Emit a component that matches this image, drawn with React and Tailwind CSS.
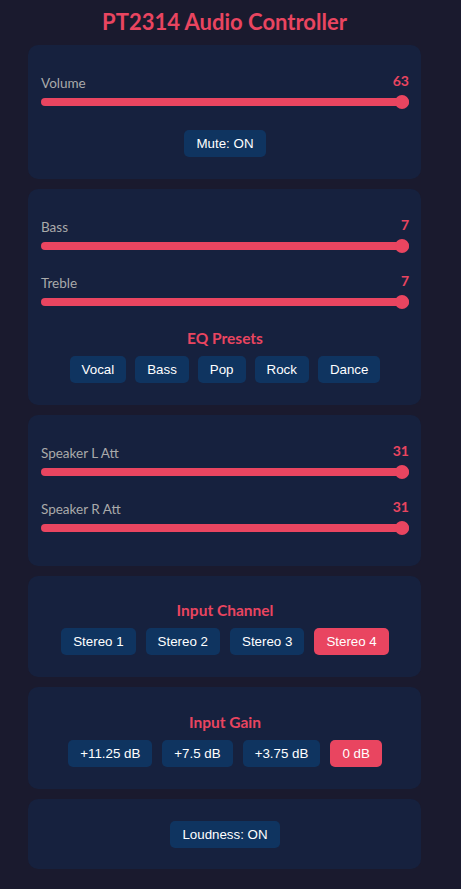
import React from "react";

const sans = { fontFamily: 'Lato, "Open Sans", sans-serif' };

function Slider({ label, value }) {
  return (
    <div className="flex flex-col">
      <div className="flex items-center justify-between h-[16px]">
        <span className="text-[13.5px] text-[#aaaaaa] leading-[16px]" style={sans}>{label}</span>
        <span className="text-[14px] font-bold text-[#e94560] leading-[16px] -mt-[4px]" style={sans}>{value}</span>
      </div>
      <div className="relative mt-[4px] h-[14px] flex items-center">
        <div className="h-[8px] w-full rounded-full bg-[#e94560]" />
        <div className="absolute right-0 top-0 h-[14px] w-[14px] rounded-full bg-[#e94560]" />
      </div>
    </div>
  );
}

function Btn({ children, active }) {
  return (
    <button
      className={
        "rounded-[5px] px-[12px] py-[6px] text-[13.333px] leading-[15px] text-white " +
        (active ? "bg-[#e94560]" : "bg-[#0f3460]")
      }
      style={{ fontFamily: '"Liberation Sans", Arial, sans-serif' }}
    >
      {children}
    </button>
  );
}

function Heading({ children }) {
  return (
    <div className="text-center text-[15.5px] font-bold leading-[20px] text-[#e94560]" style={sans}>
      {children}
    </div>
  );
}

export default function App() {
  return (
    <div className="min-h-[889px] bg-[#1a1a2e] pb-[20px]">
      <h1
        className="pt-[8px] pl-[28px] w-[421px] text-center text-[22px] font-bold leading-[28px] text-[#e94560]"
        style={sans}
      >
        PT2314 Audio Controller
      </h1>
      <div className="mt-[9px] ml-[28px] w-[393px] flex flex-col gap-[10px]">
        <div className="rounded-[10px] bg-[#16213e] pl-[13px] pr-[12px] pt-[30px] pb-[22px]">
          <Slider label="Volume" value="63" />
          <div className="mt-[21px] flex justify-center">
            <Btn>Mute: ON</Btn>
          </div>
        </div>

        <div className="rounded-[10px] bg-[#16213e] pl-[13px] pr-[12px] pt-[30px] pb-[22px]">
          <div className="flex flex-col gap-[22px]">
            <Slider label="Bass" value="7" />
            <Slider label="Treble" value="7" />
          </div>
          <div className="mt-[19px]">
            <Heading>EQ Presets</Heading>
          </div>
          <div className="mt-[8px] flex justify-center gap-[9px]">
            <Btn>Vocal</Btn>
            <Btn>Bass</Btn>
            <Btn>Pop</Btn>
            <Btn>Rock</Btn>
            <Btn>Dance</Btn>
          </div>
        </div>

        <div className="rounded-[10px] bg-[#16213e] pl-[13px] pr-[12px] pt-[30px] pb-[31px]">
          <div className="flex flex-col gap-[22px]">
            <Slider label="Speaker L Att" value="31" />
            <Slider label="Speaker R Att" value="31" />
          </div>
        </div>

        <div className="rounded-[10px] bg-[#16213e] pl-[13px] pr-[12px] pt-[24px] pb-[22px]">
          <Heading>Input Channel</Heading>
          <div className="mt-[8px] flex justify-center gap-[10px]">
            <Btn>Stereo 1</Btn>
            <Btn>Stereo 2</Btn>
            <Btn>Stereo 3</Btn>
            <Btn active>Stereo 4</Btn>
          </div>
        </div>

        <div className="rounded-[10px] bg-[#16213e] pl-[13px] pr-[12px] pt-[25px] pb-[22px]">
          <Heading>Input Gain</Heading>
          <div className="mt-[8px] flex justify-center gap-[10px]">
            <Btn>+11.25 dB</Btn>
            <Btn>+7.5 dB</Btn>
            <Btn>+3.75 dB</Btn>
            <Btn active>0 dB</Btn>
          </div>
        </div>

        <div className="rounded-[10px] bg-[#16213e] pl-[13px] pr-[12px] pt-[22px] pb-[21px]">
          <div className="flex justify-center">
            <Btn>Loudness: ON</Btn>
          </div>
        </div>
      </div>
    </div>
  );
}
